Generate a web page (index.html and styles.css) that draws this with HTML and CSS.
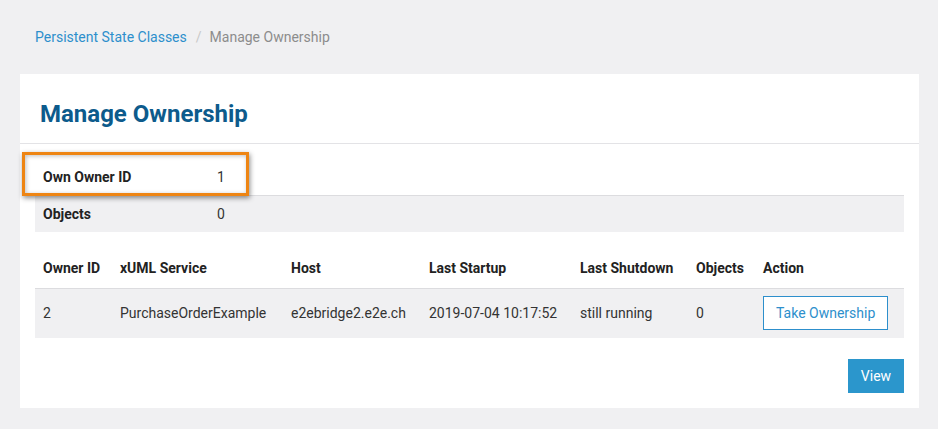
FILE: index.html
```html
<!DOCTYPE html>
<html>
<head>
<meta charset="utf-8">
<link rel="stylesheet" href="styles.css">
</head>
<body>
<nav class="crumbs">
  <a class="crumb-link">Persistent State Classes</a>
  <span class="crumb-sep">/</span>
  <span class="crumb-cur">Manage Ownership</span>
</nav>
<section class="card">
  <header class="card-head">
    <h1 class="title">Manage Ownership</h1>
  </header>
  <div class="card-body">
    <div class="kv">
      <div class="kv-row">
        <span class="kv-key">Own Owner ID</span><span class="kv-val">1</span>
      </div>
      <div class="kv-row alt">
        <span class="kv-key">Objects</span><span class="kv-val">0</span>
      </div>
      <div class="highlight"></div>
    </div>
    <table class="grid">
      <thead>
        <tr>
          <th class="c1">Owner ID</th>
          <th class="c2">xUML Service</th>
          <th class="c3">Host</th>
          <th class="c4">Last Startup</th>
          <th class="c5">Last Shutdown</th>
          <th class="c6">Objects</th>
          <th class="c7">Action</th>
        </tr>
      </thead>
      <tbody>
        <tr>
          <td>2</td>
          <td>PurchaseOrderExample</td>
          <td>e2ebridge2.e2e.ch</td>
          <td>2019-07-04 10:17:52</td>
          <td>still running</td>
          <td>0</td>
          <td><button class="btn-outline">Take Ownership</button></td>
        </tr>
      </tbody>
    </table>
    <div class="actions">
      <button class="btn-primary">View</button>
    </div>
  </div>
</section>
</body>
</html>
```
FILE: styles.css
```css
* { box-sizing: border-box; }
html, body { margin: 0; padding: 0; }
body {
  background: #f0f0f2;
  font-family: Roboto, "Liberation Sans", sans-serif;
  font-size: 14px;
  color: #333;
  padding: 28px 19px 0 20px;
  width: 938px;
  height: 429px;
  overflow: hidden;
}
.crumbs {
  padding-left: 15px;
  height: 18px;
  line-height: 18px;
  font-size: 14px;
  display: flex;
}
.crumb-link { color: #2d8fcc; }
.crumb-sep { color: #c8c8c8; margin: 0 8px 0 9px; }
.crumb-cur { color: #8c8c8c; }
.card {
  margin-top: 28px;
  background: #fff;
  width: 899px;
  height: 334px;
}
.card-head {
  height: 70px;
  border-bottom: 1px solid #e3e3e6;
  padding: 26px 20px 0 20px;
}
.title {
  margin: 0;
  font-size: 24px;
  line-height: 28px;
  font-weight: 700;
  color: #0d5b8c;
}
.card-body {
  padding: 14px 15px 0 15px;
}
.kv { position: relative; }
.kv-row {
  display: flex;
  height: 37px;
  align-items: center;
  padding-left: 8px;
  font-size: 14px;
}
.kv-row.alt { background: #f0f0f2; border-top: 1px solid #dcdcdf; }
.kv-key { width: 174px; font-weight: 700; color: #222; }
.kv-val { color: #333; }
.highlight {
  position: absolute;
  left: -13px;
  top: -6px;
  width: 227px;
  height: 44px;
  border: 3px solid #ee8513;
  box-shadow: 1px 2px 5px rgba(0,0,0,0.45), inset 1px 1px 4px rgba(0,0,0,0.25);
  pointer-events: none;
}
.grid {
  margin-top: 17px;
  width: 869px;
  border-collapse: collapse;
  font-size: 14px;
}
.grid th {
  text-align: left;
  font-weight: 700;
  color: #222;
  height: 39px;
  padding: 0 0 0 8px;
  border-bottom: 1px solid #dcdcdf;
  white-space: nowrap;
}
.grid td {
  background: #f0f0f2;
  height: 50px;
  padding: 0 0 0 8px;
  color: #333;
  white-space: nowrap;
}
.c1 { width: 77px; }
.c2 { width: 171px; }
.c3 { width: 138px; }
.c4 { width: 151px; }
.c5 { width: 116px; }
.c6 { width: 67px; }
.btn-outline {
  font-family: inherit;
  font-size: 14px;
  color: #2d8fcc;
  background: #fff;
  border: 1px solid #2d8fcc;
  height: 34px;
  padding: 0 12px;
  width: 125px;
  cursor: pointer;
}
.actions {
  display: flex;
  justify-content: flex-end;
  margin-top: 21px;
}
.btn-primary {
  font-family: inherit;
  font-size: 14px;
  color: #fff;
  background: #2b96cc;
  border: none;
  height: 34px;
  width: 56px;
  padding: 0;
}
```
